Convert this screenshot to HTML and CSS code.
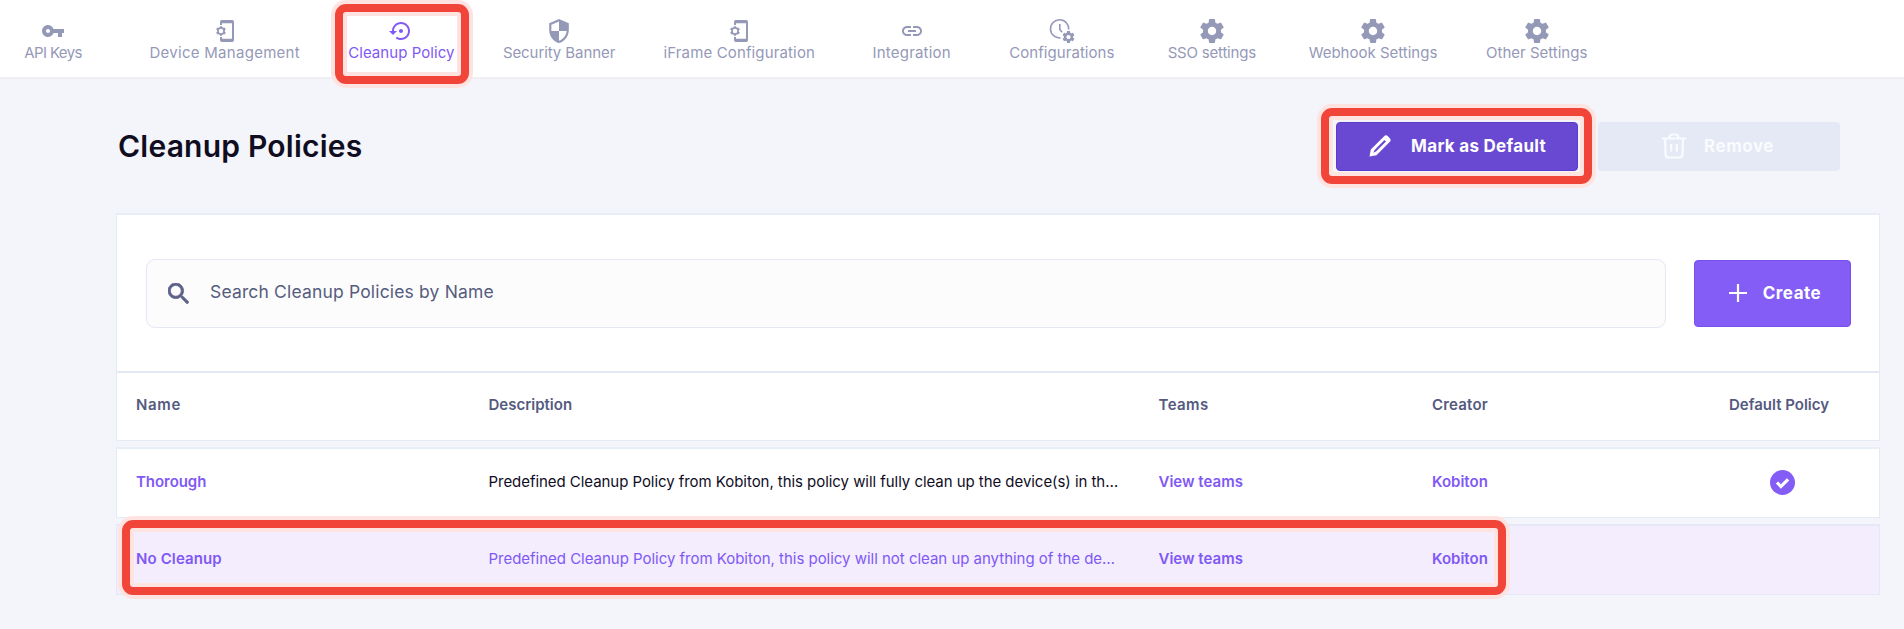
FILE: index.html
```
<!DOCTYPE html>
<html lang="en">
<head>
<meta charset="utf-8">
<title>Cleanup Policies</title>
<link rel="stylesheet" href="styles.css">
</head>
<body>
<svg class="defs" width="0" height="0" aria-hidden="true">
  <symbol id="gear" viewBox="2 2 20 20"><path d="M19.43 12.98c.04-.32.07-.64.07-.98s-.03-.66-.07-.98l2.11-1.65c.19-.15.24-.42.12-.64l-2-3.46c-.12-.22-.39-.3-.61-.22l-2.49 1c-.52-.4-1.08-.73-1.69-.98l-.38-2.65C14.46 2.18 14.25 2 14 2h-4c-.25 0-.46.18-.49.42l-.38 2.65c-.61.25-1.17.59-1.69.98l-2.49-1c-.23-.09-.49 0-.61.22l-2 3.46c-.13.22-.07.49.12.64l2.11 1.65c-.04.32-.07.65-.07.98s.03.66.07.98l-2.11 1.65c-.19.15-.24.42-.12.64l2 3.46c.12.22.39.3.61.22l2.49-1c.52.4 1.08.73 1.69.98l.38 2.65c.03.24.24.42.49.42h4c.25 0 .46-.18.49-.42l.38-2.65c.61-.25 1.17-.59 1.69-.98l2.49 1c.23.09.49 0 .61-.22l2-3.46c.12-.22.07-.49-.12-.64l-2.11-1.65zM12 15.5c-1.93 0-3.5-1.57-3.5-3.5s1.57-3.5 3.5-3.5 3.5 1.57 3.5 3.5-1.57 3.5-3.5 3.5z"/></symbol>
  <symbol id="device" viewBox="0 0 24 24">
    <path d="M8 6V2.8Q8 2 8.8 2H19.2Q20 2 20 2.8V21.2Q20 22 19.2 22H8.800Q8 22 8 21.2V18" fill="none" stroke="currentColor" stroke-width="2"/>
    <path d="M8 3.600h12M8 20.400h12" stroke="currentColor" stroke-width="1.400"/>
    <circle cx="8" cy="12" r="3.100" fill="none" stroke="currentColor" stroke-width="1.700"/>
    <path d="M8 7.200v1.800M8 15v1.800M3.700 9.500l1.700 1M10.600 13.500l1.700 1M3.700 14.500l1.700-1M10.600 10.500l1.700-1" stroke="currentColor" stroke-width="2.200"/>
  </symbol>
</svg>

<nav class="nav">
  <a class="tab t-api"><svg viewBox="0 0 24 24"><path d="M12.65 10C11.83 7.67 9.61 6 7 6c-3.31 0-6 2.690-6 6s2.690 6 6 6c2.610 0 4.830-1.670 5.650-4H17v4h4v-4h2v-4H12.650zM7 14c-1.100 0-2-.9-2-2s.9-2 2-2 2 .9 2 2-.9 2-2 2z"/></svg><span>API Keys</span></a>
  <a class="tab t-device"><svg><use href="#device"/></svg><span>Device Management</span></a>
  <a class="tab t-cleanup active"><svg viewBox="0 0 24 24"><path d="M14 12c0-1.100-.9-2-2-2s-2 .9-2 2 .9 2 2 2 2-.9 2-2zm-2-9c-4.970 0-9 4.030-9 9H0l4 4 4-4H5c0-3.870 3.130-7 7-7s7 3.130 7 7-3.130 7-7 7c-1.510 0-2.910-.49-4.060-1.300l-1.420 1.440C8.040 20.300 9.940 21 12 21c4.970 0 9-4.030 9-9s-4.030-9-9-9z"/></svg><span>Cleanup Policy</span></a>
  <a class="tab t-security"><svg viewBox="1 1 22 22"><path d="M12 1L3 5v6c0 5.550 3.840 10.740 9 12 5.160-1.260 9-6.450 9-12V5l-9-4zm0 10.990h7c-.53 4.120-3.280 7.790-7 8.940V12H5V6.300l7-3.110v8.800z"/></svg><span>Security Banner</span></a>
  <a class="tab t-iframe"><svg><use href="#device"/></svg><span>iFrame Configuration</span></a>
  <a class="tab t-integration"><svg viewBox="0 0 24 24"><path d="M3.900 12c0-1.710 1.390-3.100 3.100-3.100h4V7H7c-2.760 0-5 2.240-5 5s2.240 5 5 5h4v-1.900H7c-1.710 0-3.100-1.390-3.100-3.100zM8 13h8v-2H8v2zm9-6h-4v1.900h4c1.710 0 3.100 1.390 3.100 3.100s-1.390 3.100-3.100 3.100h-4V17h4c2.760 0 5-2.240 5-5s-2.240-5-5-5z"/></svg><span>Integration</span></a>
  <a class="tab t-config"><svg viewBox="0 0 24 24"><path d="M10.500 18.900A9.100 9.100 0 1 1 18.700 10.500" fill="none" stroke="currentColor" stroke-width="1.600"/><path d="M9.800 5v5.500l2.300 2.800" fill="none" stroke="currentColor" stroke-width="1.600"/><use href="#gear" x="12.500" y="12" width="12" height="12"/></svg><span>Configurations</span></a>
  <a class="tab t-sso"><svg><use href="#gear"/></svg><span>SSO settings</span></a>
  <a class="tab t-webhook"><svg><use href="#gear"/></svg><span>Webhook Settings</span></a>
  <a class="tab t-other"><svg><use href="#gear"/></svg><span>Other Settings</span></a>
</nav>

<main class="page">
  <header class="page-head">
    <h1>Cleanup Policies</h1>
    <div class="actions">
      <button class="btn btn-mark"><svg class="pencil" viewBox="0 0 24 24"><path d="M1.500 22.500l1.300-7L15.900 2.400a3 3 0 0 1 4.200 0l1.500 1.500a3 3 0 0 1 0 4.200L8.500 21.200zM5.300 18.700l2.700-1.300L18 7.600l-1.600-1.600-9.800 9.900z" fill-rule="evenodd"/></svg><span>Mark as Default</span></button>
      <button class="btn btn-remove"><svg class="trash" viewBox="0 0 24 26"><path d="M0 5.500h24M3 5.500l.6 16.500q.2 2.500 2.400 2.500h12q2.200 0 2.400-2.500L21 5.500M7.500 5.500Q7.500 1.500 10 1.500h4Q16.500 1.500 16.500 5.500M9.200 11v7.500M14.800 11v7.500" fill="none" stroke="currentColor" stroke-width="2.200"/></svg><span>Remove</span></button>
    </div>
  </header>

  <section class="panel">
    <div class="toolbar">
      <div class="search"><svg viewBox="3 3 17.500 17.500"><path d="M15.500 14h-.79l-.28-.27C15.410 12.590 16 11.110 16 9.500 16 5.910 13.090 3 9.500 3S3 5.910 3 9.500 5.910 16 9.500 16c1.610 0 3.090-.59 4.230-1.570l.27.28v.79l5 4.990L20.490 19l-4.990-5zm-6 0C7.010 14 5 11.990 5 9.500S7.010 5 9.500 5 14 7.010 14 9.500 11.990 14 9.500 14z" stroke="currentColor" stroke-width=".6"/></svg><span>Search Cleanup Policies by Name</span></div>
      <button class="btn btn-create"><svg viewBox="0 0 18 18"><path d="M9 0v18M0 9h18" stroke="currentColor" stroke-width="2.200"/></svg><span>Create</span></button>
    </div>
    <div class="row row-head">
      <div class="h-name">Name</div><div>Description</div><div class="h-teams">Teams</div><div class="h-creator">Creator</div><div class="center">Default Policy</div>
    </div>
  </section>

  <div class="row row-item">
    <div class="link c-thorough">Thorough</div>
    <div class="desc">Predefined Cleanup Policy from Kobiton, this policy will fully clean up the device(s) in th…</div>
    <div class="link">View teams</div>
    <div class="link">Kobiton</div>
    <div class="center"><svg class="check" viewBox="0 0 25 25"><circle cx="12.500" cy="12.500" r="12.500"/><path d="M7 12.500l3.900 4 7.200-7.200" fill="none" stroke="#fff" stroke-width="3.200"/></svg></div>
  </div>
  <div class="row row-item selected">
    <div class="link c-none">No Cleanup</div>
    <div class="desc">Predefined Cleanup Policy from Kobiton, this policy will not clean up anything of the de…</div>
    <div class="link">View teams</div>
    <div class="link">Kobiton</div>
    <div></div>
  </div>
</main>

<div class="callout callout-tab"></div>
<div class="callout callout-mark"></div>
<div class="callout callout-row"></div>
</body>
</html>
```
FILE: styles.css
```
* { box-sizing: border-box; }
body {
  margin: 0;
  position: relative;
  height: 629px;
  overflow: hidden;
  background: #f3f5fa;
  font-family: Inter, "Open Sans", sans-serif;
  font-size: 15px;
  color: #0f0d1f;
}
.defs { position: absolute; }
svg { fill: currentColor; flex: none; }

/* Settings tabs */
.nav {
  display: grid;
  grid-template-columns: 96px 150px 106px 112px 151px 96.5px 106.5px 96px 129px 101px;
  column-gap: 48.7px;
  height: 79px;
  padding: 19px 0 0 5px;
  background: #fff;
  border-bottom: 2px solid #edeff5;
}
.tab {
  display: flex;
  flex-direction: column;
  align-items: center;
  color: #9599b8;
  white-space: nowrap;
}
.tab svg { width: 24px; height: 24px; overflow: visible; }
.tab span { line-height: 19px; }
.tab.active { color: #8059f5; }
.t-api { letter-spacing: -.6px; }
.t-device { letter-spacing: .28px; }
.t-cleanup, .t-config { letter-spacing: .06px; }
.t-security { letter-spacing: -.08px; }
.t-iframe { letter-spacing: .14px; }
.t-integration { letter-spacing: .2px; }
.t-sso { letter-spacing: -.2px; }

.page { padding: 0 24px 0 116px; }
.page-head {
  display: flex;
  align-items: center;
  justify-content: space-between;
  height: 134px;
  padding-right: 40px;
}
h1 {
  margin: 0 0 0 2px;
  font-size: 30px;
  font-weight: 600;
  letter-spacing: .22px;
}
.actions { display: flex; gap: 20px; }
.btn {
  display: flex;
  align-items: center;
  justify-content: center;
  padding: 0;
  border: 0;
  border-radius: 4px;
  color: #fff;
  font: 700 17px Inter, sans-serif;
}
.btn-mark { width: 242px; height: 49px; gap: 19px; background: #6a49d2; border: 1px solid #5d39cc; letter-spacing: .28px; }
.btn-remove { width: 242px; height: 49px; gap: 18px; background: #e5e9f5; color: #fafbfe; letter-spacing: .55px; }
.btn-remove svg { margin-left: -2px; }
.pencil { width: 24px; height: 24px; }
.trash { width: 24px; height: 26px; }

/* Policy list */
.panel {
  height: 228px;
  background: #fff;
  border: 1px solid #e5eaf5;
  border-top: 2px solid #e9edf6;
}
.toolbar {
  display: flex;
  align-items: center;
  gap: 28px;
  height: 158px;
  padding: 0 28px 0 29px;
  border-bottom: 2px solid #e3e8f3;
}
.search {
  flex: 1;
  display: flex;
  align-items: center;
  gap: 21px;
  height: 69px;
  padding-left: 21px;
  background: #fcfcfc;
  border: 1px solid #e4e8f4;
  border-radius: 9px;
  color: #565c7e;
  font-size: 17.5px;
  letter-spacing: .16px;
}
.search span { padding-bottom: 3px; }
.search svg { width: 21px; height: 21px; color: #5e6188; }
.btn-create { width: 157px; height: 67px; gap: 16px; background: #835df6; border: 1px solid #794fee; letter-spacing: .5px; padding: 0 0 1px 5px; }
.btn-create svg { width: 18px; height: 18px; }
.row {
  display: grid;
  grid-template-columns: 352.5px 670px 273.500px 247px 200px;
  align-items: center;
  padding-left: 19px;
  font-size: 15px;
  white-space: nowrap;
}
.row-head { height: 67px; padding-bottom: 4px; font-weight: 600; color: #555a7f; }
.h-name { letter-spacing: .65px; }
.h-teams { letter-spacing: .4px; }
.h-creator { letter-spacing: .2px; }
.row-item {
  height: 71px;
  margin-top: 6px;
  padding-bottom: 3px;
  background: #fff;
  border: 1px solid #e5eaf5;
  border-top: 2px solid #e8eef6;
}
.center { display: flex; justify-content: center; }
.link { color: #8059f5; font-weight: 600; }
.c-thorough { letter-spacing: -.05px; }
.c-none { letter-spacing: .12px; }
.desc { letter-spacing: -.05px; }
.selected { background: #f3edfd; border-color: #e6e7f7; }
.selected .desc { color: #8059f5; letter-spacing: -.02px; }
.check { width: 25px; height: 25px; color: #835df6; margin: 2px 0 0 7px; }

/* Callout frames drawn over the interface */
.callout {
  position: absolute;
  border: 8px solid #f24539;
  border-radius: 11px;
  box-shadow: 0 0 0 4px #fee3e1, inset 0 0 0 4px #fee3e1;
}
.callout-tab { left: 335px; top: 4px; width: 134px; height: 80px; }
.callout-mark { left: 1321px; top: 108px; width: 271px; height: 76px; }
.callout-row { left: 122px; top: 520px; width: 1384px; height: 75px; }
```
